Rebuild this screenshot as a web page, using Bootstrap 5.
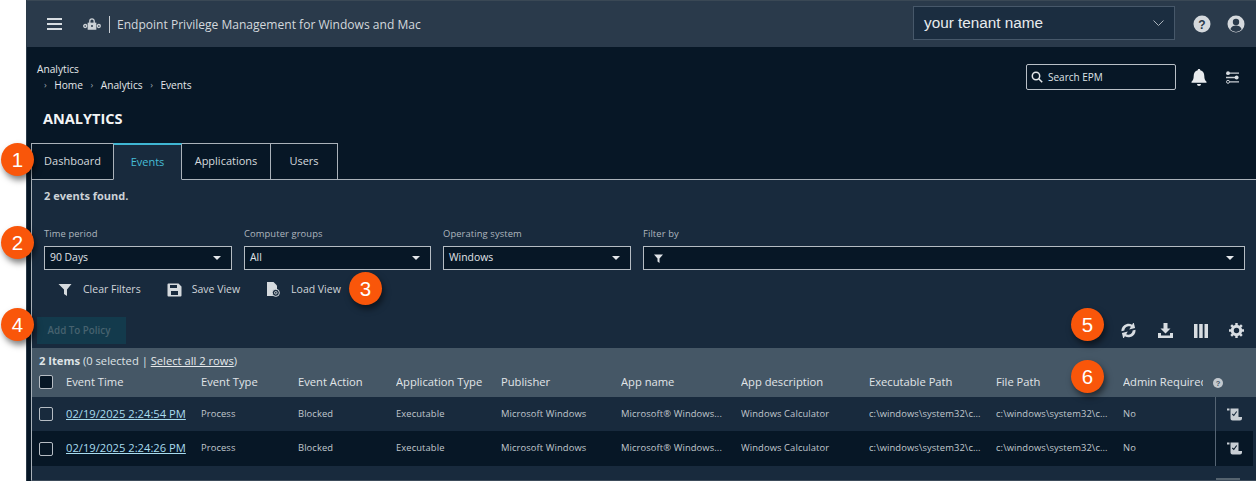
<!DOCTYPE html>
<html lang="en"><head><meta charset="utf-8"><title>Analytics</title>
<link href="https://cdn.jsdelivr.net/npm/bootstrap@5.3.0/dist/css/bootstrap.min.css" rel="stylesheet">
<style>
html,body{height:481px;overflow:hidden;background:#fff}
body{font-family:"Open Sans",sans-serif;font-size:11px;color:#d8dde2}
.frame{margin-left:26px;height:481px;background:#071726;position:relative;display:flex;flex-direction:column;border-left:1px solid #2b3a48}
.topbar{height:47px;background:#2a3a4b;flex:none;padding:0 11px 0 20px;border-top:1px solid #3a4855}
.logo{margin-left:20px}
.brand{font-size:12.05px;color:#d3d8dd;border-left:1px solid #c9ced3;padding-left:7px;line-height:17px;margin-left:8px}
.tenant{width:262px;height:34px;background:#1b2d40;border:1px solid #47586a;font:15.3px "Liberation Sans",sans-serif;color:#e8ebee;padding:0 10px;margin:-2px 18px 0 0}
.crumbs{padding:14px 16px 0 10px;height:96px;flex:none;position:relative}
.crumbs .t{font-size:10.2px;color:#e4e7ea;line-height:16px}
.crumbs .p{font-size:10.2px;color:#e4e7ea;line-height:16px;padding-left:7px;gap:7.5px}
.crumbs .c{color:#9ba6b0;font-size:9px}
.crumbs h1{font-size:14.5px;font-weight:700;color:#f2f4f5;margin:17px 0 0 6px}
.toolbar{gap:14px;height:26px;margin-top:3px}
.search{width:150px;height:26px;border:1px solid #b9c0c7;border-radius:2px;padding-left:4px;gap:5px;font-size:10px;color:#dfe3e7}
.tabs-row{margin-left:4px;flex:none;height:37px}
.tabx{border:1px solid #aab2ba;margin-left:-1px;font-size:11px;color:#d5dade;height:37px;display:flex;align-items:center;justify-content:center;background:#071726}
.tabx.active{color:#46bcd6;background:#182a3d;border-bottom-color:#182a3d;border-top:2px solid #3fb6d3}
.panel{margin-left:4px;flex:1;background:#182a3d;border-left:1px solid #aab2ba;border-top:1px solid #aab2ba;margin-top:-1px;border-bottom:1px solid #3c4b5a;display:flex;flex-direction:column;min-height:0;position:relative}
.found{font-size:11px;font-weight:700;color:#ccd2d7;padding:8px 12px 0;height:47px;flex:none}
.filters{padding:0 11px 0 12px;gap:12px;flex:none}
.filters label{font-size:9.4px;color:#aeb6bd;display:block;line-height:13px;margin-bottom:6px;letter-spacing:.1px}
.sel{height:24px;border:1px solid #b5bcc3;background:#071726;font-size:10.4px;color:#e0e4e8;padding:0 10px 0 5px}
.caret{width:0;height:0;border:4px solid transparent;border-top:4px solid #e4e7ea;border-bottom:0}
.actions{padding:0 0 0 26px;gap:26px;height:39px;flex:none;font-size:10.5px;color:#d0d5da}
.act{gap:10px}
.addrow{padding:8px 12px 0 5px;height:39px;flex:none}
.btn.addbtn:disabled{width:89px;height:27px;background:#133a4c;color:#47626f;font-size:9.8px;font-weight:600;border:0;border-radius:0;padding:1px 5px 0 0;opacity:1}
.tools{gap:21px;height:27px}
.grid-wrap{flex:none}
.count{background:#455766;height:21px;padding:6px 7px 0;font-size:11.2px;color:#dfe3e6;line-height:14px}
.count a{color:#e6e9ec}
table.ev{table-layout:fixed;width:1224px;margin:0;--bs-table-bg:transparent;--bs-table-color:#c4cbd1;--bs-table-border-color:transparent;border-collapse:collapse}
table.ev th,table.ev td{padding:0;vertical-align:middle;white-space:nowrap;overflow:hidden;border:0}
table.ev thead th{background:#455766;color:#e1e5e8;font-size:11.2px;font-weight:400;height:28px;padding-bottom:2px}
table.ev thead th.hp{overflow:visible}
.clip{display:block;width:80px;overflow:hidden}
table.ev td{font-size:9.4px;color:#c0c7cd;letter-spacing:.1px;box-shadow:none}
table.ev tbody tr:nth-child(1) td{height:34px;background:#182a3d}
table.ev tbody tr:nth-child(2) td{height:35px;background:#071726}
table.ev tbody tr td.end{background:#182a3d}
table.ev td a{font-size:11.2px;color:#a8dcef;letter-spacing:0}
.cb{width:14px;height:14px;border:1px solid #b6bdc4;border-radius:2px;background:#071726;margin-left:7px;display:block}
td .cb{background:transparent}
.sep{border-left:1px solid #556473!important;text-align:center}
.nub{position:absolute;right:16px;bottom:0;width:24px;height:2px;background:#55636f}
.num{position:absolute;width:33px;height:33px;border-radius:50%;background:#f9560a;color:#fff;font:20.5px/33px "Liberation Sans",sans-serif;text-align:center;box-shadow:2px 4px 6px rgba(0,0,0,.5);z-index:5}
.n1{left:1px;top:143px}.n2{left:1px;top:226px}.n3{left:349px;top:272px}.n4{left:1px;top:308px}.n5{left:1071px;top:308px}.n6{left:1071px;top:360px}
</style></head><body>
<span class="num n1">1</span><span class="num n2">2</span><span class="num n3">3</span><span class="num n4">4</span><span class="num n5">5</span><span class="num n6">6</span>
<div class="frame">
<header class="topbar d-flex align-items-center">
<svg width="16" height="12" viewBox="0 0 16 12" fill="#d8dde2"><rect y="0" width="15" height="2"/><rect y="5" width="15" height="2"/><rect y="10" width="15" height="2"/></svg>
<svg class="logo" width="18" height="12" viewBox="0 0 18 12" fill="none" stroke="#cdd2d7" stroke-width="1.300"><circle cx="2.200" cy="8" r="1.500"/><circle cx="15.800" cy="8" r="1.500"/><rect x="5.300" y="5.300" width="7.400" height="5.800" fill="#cdd2d7"/><path d="M6.800 5V3a2.200 2.200 0 0 1 4.400 0v2"/><circle cx="9" cy="8" r="1" fill="#2a3a4b" stroke="none"/></svg>
<span class="brand">Endpoint Privilege Management for Windows and Mac</span>
<div class="ms-auto d-flex align-items-center">
<div class="tenant d-flex align-items-center justify-content-between"><span>your tenant name</span><svg width="11" height="6" viewBox="0 0 11 6" fill="none" stroke="#aab3bb"><path d="M.5.5l5 5 5-5"/></svg></div>
<svg width="18" height="18" viewBox="0 0 18 18"><circle cx="9" cy="9" r="8.500" fill="#d5d9dd"/><text x="9" y="13.500" text-anchor="middle" font-family="Liberation Sans" font-weight="700" font-size="12" fill="#2a3a4b">?</text></svg>
<svg class="ms-3" width="18" height="18" viewBox="0 0 18 18"><circle cx="9" cy="9" r="8.500" fill="#d5d9dd"/><circle cx="9" cy="7" r="3.200" fill="#2a3a4b"/><path d="M3.300 14.200c1-3 3.400-3.800 5.700-3.800s4.700.8 5.700 3.800A8 8 0 0 1 9 17a8 8 0 0 1-5.700-2.800z" fill="#2a3a4b"/></svg>
</div>
</header>
<section class="crumbs">
<div class="d-flex justify-content-between">
<div><div class="t">Analytics</div><div class="p d-flex align-items-center"><span class="c">›</span><span>Home</span><span class="c">›</span><span>Analytics</span><span class="c">›</span><span>Events</span></div></div>
<div class="toolbar d-flex align-items-center">
<div class="search d-flex align-items-center"><svg width="12" height="12" viewBox="0 0 12 12" fill="none" stroke="#e4e7ea" stroke-width="1.500"><circle cx="5" cy="5" r="3.700"/><path d="M7.700 7.700l3.500 3.500"/></svg><span>Search EPM</span></div>
<svg width="18" height="19" viewBox="0 0 18 19" fill="#e8ebee"><path d="M9 1c.8 0 1.300.5 1.300 1.200C13 2.800 14.300 5 14.300 8c0 3 .8 4.500 2.200 5.800v1H1.500v-1C2.900 12.500 3.700 11 3.700 8c0-3 1.300-5.200 4-5.800C7.700 1.500 8.200 1 9 1z"/><path d="M7 16h4a2 2 0 0 1-4 0z"/></svg>
<svg class="ms-1" width="14" height="13" viewBox="0 0 14 13" fill="none" stroke="#c9ced3"><path d="M3 2.200h10M0 6.500h9M3 10.800h10" stroke-width="1.300"/><circle cx="2" cy="2.200" r="1.900" fill="#d8dde2" stroke="none"/><circle cx="10.600" cy="6.500" r="2" fill="#d8dde2" stroke="none"/><circle cx="2" cy="10.800" r="1.500" fill="#071726"/></svg>
</div></div>
<h1>ANALYTICS</h1>
</section>
<nav class="tabs-row d-flex">
<div class="tabx" style="width:83px;margin-left:0">Dashboard</div><div class="tabx active" style="width:69px;z-index:2">Events</div><div class="tabx" style="width:90px">Applications</div><div class="tabx" style="width:68px">Users</div>
</nav>
<section class="panel">
<div class="found">2 events found.</div>
<div class="filters d-flex">
<div style="width:188px"><label>Time period</label><div class="sel d-flex align-items-center justify-content-between"><span>90 Days</span><i class="caret"></i></div></div>
<div style="width:187px"><label>Computer groups</label><div class="sel d-flex align-items-center justify-content-between"><span>All</span><i class="caret"></i></div></div>
<div style="width:188px"><label>Operating system</label><div class="sel d-flex align-items-center justify-content-between"><span>Windows</span><i class="caret"></i></div></div>
<div style="width:602px"><label>Filter by</label><div class="sel d-flex align-items-center justify-content-between"><svg width="9" height="9" viewBox="0 0 9 9" fill="#e0e4e8" style="margin-left:5px"><path d="M0 .5h9L5.500 4.500V9l-2-1.500V4.500z"/></svg><i class="caret"></i></div></div>
</div>
<div class="actions d-flex align-items-center">
<div class="act d-flex align-items-center"><svg width="15" height="13" viewBox="0 0 15 13" fill="#d5dade"><path d="M.5 1h13L9 6.500V13L6 11V6.500z"/></svg><span>Clear Filters</span></div>
<div class="act d-flex align-items-center"><svg width="15" height="14" viewBox="0 0 14 14"><path d="M0 1.500A1 1 0 0 1 1 .5h10l3 3v9a1 1 0 0 1-1 1H1a1 1 0 0 1-1-1z" fill="#d5dade"/><rect x="2.500" y="2" width="7" height="3" fill="#182a3d"/><rect x="3.500" y="8" width="7" height="4" fill="#182a3d"/></svg><span>Save View</span></div>
<div class="act d-flex align-items-center"><svg width="15" height="15" viewBox="0 0 15 15"><path d="M1 0h6.500L11 3.500V14H1z" fill="#d5dade"/><circle cx="9.800" cy="10.800" r="3.600" fill="#182a3d" stroke="#d5dade"/><circle cx="9.800" cy="10.800" r="1.300" fill="none" stroke="#d5dade" stroke-width=".9"/></svg><span>Load View</span></div>
</div>
<div class="addrow d-flex align-items-start justify-content-between">
<button class="btn addbtn" disabled>Add To Policy</button>
<div class="tools d-flex align-items-center">
<svg width="17" height="15" viewBox="0 0 17 15" fill="#d8dde2"><g transform="rotate(-14 8.500 7.500)"><path d="M1.500 6.500C2.200 3 5 .7 8.500.7c2 0 3.700.8 4.900 2L15.500.7v6H9.400l2.300-2.300c-.8-.7-2-1-3.200-1-1.900 0-3.400 1.200-4 3.100z"/><path d="M15.500 8.500c-.7 3.500-3.500 5.800-7 5.800-2 0-3.700-.8-4.900-2L1.500 14.300v-6h6.100l-2.300 2.300c.8.700 2 1 3.200 1 1.900 0 3.400-1.200 4-3.100z"/></g></svg>
<svg width="15" height="15" viewBox="0 0 15 15" fill="#d8dde2"><path d="M5.500 0h4v5.500h3L7.500 10.500l-5-5h3z"/><path d="M0 10h3v2.500h9V10h3v5H0z"/></svg>
<svg width="14" height="14" viewBox="0 0 14 14" fill="#d8dde2"><rect width="3.500" height="14"/><rect x="5.200" width="3.500" height="14"/><rect x="10.500" width="3.500" height="14"/></svg>
<svg width="15" height="15" viewBox="0 0 16 16"><circle cx="8" cy="8" r="4.500" fill="none" stroke="#d8dde2" stroke-width="3.200"/><path d="M8 0v3M8 13v3M0 8h3M13 8h3M2.300 2.300l2.200 2.200M11.500 11.500l2.200 2.200M13.700 2.300l-2.200 2.200M4.500 11.500l-2.200 2.200" stroke="#d8dde2" stroke-width="2.600"/></svg>
</div></div>
<div class="grid-wrap">
<div class="count"><b>2 Items</b> (0 selected | <a href="#">Select all 2 rows</a>)</div>
<table class="table ev">
<colgroup><col style="width:34px"><col style="width:135px"><col style="width:97px"><col style="width:98px"><col style="width:105px"><col style="width:120px"><col style="width:120px"><col style="width:128px"><col style="width:127px"><col style="width:127px"><col style="width:92px"><col style="width:38px"><col style="width:3px"></colgroup>
<thead><tr><th><i class="cb"></i></th><th>Event Time</th><th>Event Type</th><th>Event Action</th><th>Application Type</th><th>Publisher</th><th>App name</th><th>App description</th><th>Executable Path</th><th>File Path</th><th><span class="clip">Admin Required</span></th><th class="hp"><svg width="10" height="10" viewBox="0 0 10 10" style="margin-left:-2px"><circle cx="5" cy="5" r="5" fill="#c3c9cf"/><text x="5" y="8" text-anchor="middle" font-family="Liberation Sans" font-weight="700" font-size="7.500" fill="#455766">?</text></svg></th><th></th></tr></thead>
<tbody>
<tr><td><i class="cb"></i></td><td><a href="#">02/19/2025 2:24:54 PM</a></td><td>Process</td><td>Blocked</td><td>Executable</td><td>Microsoft Windows</td><td>Microsoft® Windows...</td><td>Windows Calculator</td><td>c:\windows\system32\c...</td><td>c:\windows\system32\c...</td><td>No</td><td class="sep"><svg width="15" height="13" viewBox="0 0 15 13" fill="#c8ced4"><path d="M0 .5h2.500v2H0zM3.500 .5h8v8.500H15v1.500a2 2 0 0 1-2 2H5.500a2 2 0 0 1-2-2z"/><path d="M5.300 6l1.500 1.500L9.700 3.500" stroke="#182a3d" stroke-width="1.100" fill="none"/></svg></td><td class="end"></td></tr>
<tr><td><i class="cb"></i></td><td><a href="#">02/19/2025 2:24:26 PM</a></td><td>Process</td><td>Blocked</td><td>Executable</td><td>Microsoft Windows</td><td>Microsoft® Windows...</td><td>Windows Calculator</td><td>c:\windows\system32\c...</td><td>c:\windows\system32\c...</td><td>No</td><td class="sep"><svg width="15" height="13" viewBox="0 0 15 13" fill="#c8ced4"><path d="M0 .5h2.500v2H0zM3.500 .5h8v8.500H15v1.500a2 2 0 0 1-2 2H5.500a2 2 0 0 1-2-2z"/><path d="M5.300 6l1.500 1.500L9.700 3.500" stroke="#071726" stroke-width="1.100" fill="none"/></svg></td><td class="end"></td></tr>
</tbody></table>
</div>
<i class="nub"></i>
</section>
</div>
<script src="https://cdn.jsdelivr.net/npm/bootstrap@5.3.0/dist/js/bootstrap.bundle.min.js"></script>
</body></html>
